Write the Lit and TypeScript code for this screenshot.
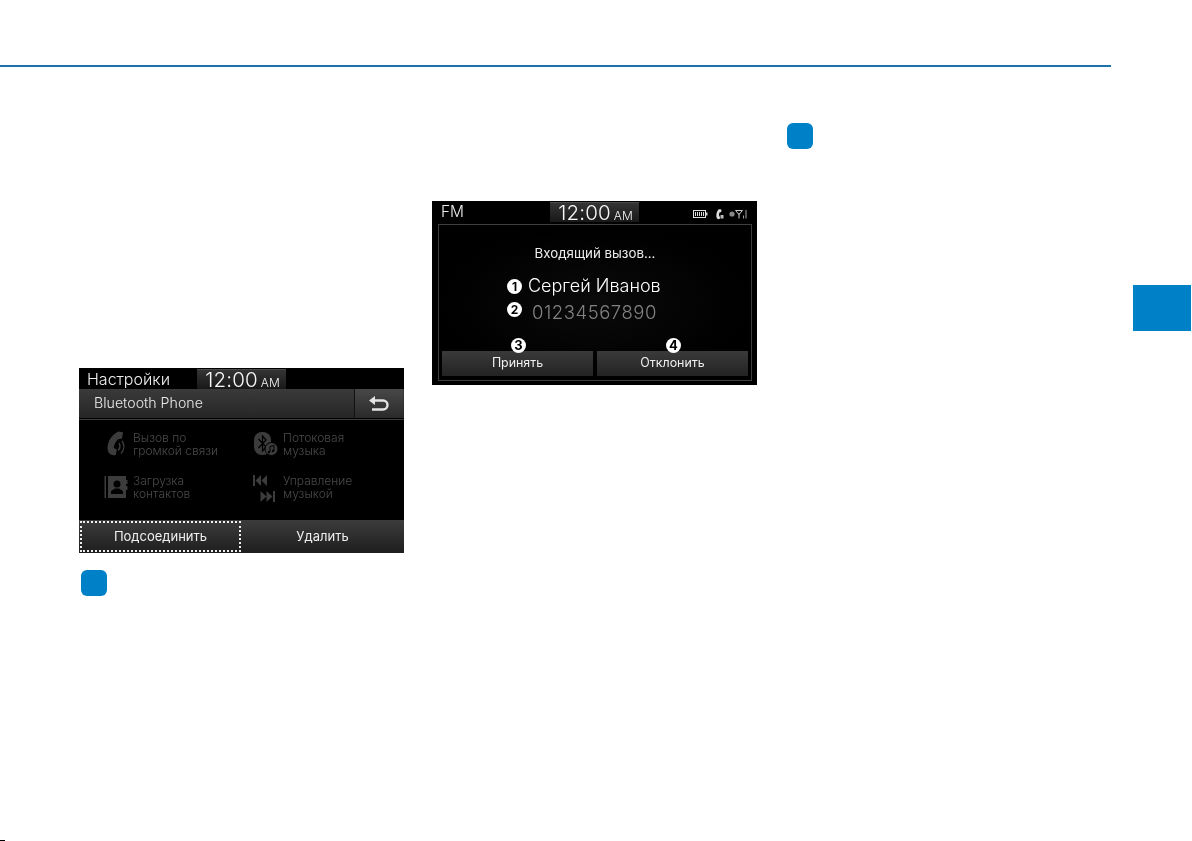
import { LitElement, html, css, svg } from "lit";
import { customElement } from "lit/decorators.js";

const backIcon = svg`<svg viewBox="0 0 20 16" width="20" height="16"><path d="M0 4.500 6 0v9Z" fill="#e4e4e4"/><path d="M4 4.500h10a4.500 4.500 0 0 1 0 9H3" fill="none" stroke="#e4e4e4" stroke-width="2.400"/></svg>`;
const phoneIcon = svg`<svg viewBox="0 0 21 25" width="21" height="25"><path d="M12.500.5 17 1.200l-1 6.300-4 .8C9.500 11 7.800 14 7.800 17l3 1.500-1 5.500C5 25 1.500 22 1.500 17 1.500 10 6 3.500 12.500.5Z" fill="#3c3c3c"/><path d="M13 12c1.500 2.500 1.300 5-.8 7.500M16 10c2.600 3.500 2.500 8.500-1 12.500" fill="none" stroke="#3c3c3c" stroke-width="1.400"/></svg>`;
const btIcon = svg`<svg viewBox="0 0 26 26" width="26" height="26"><rect x="1" y="1" width="17" height="23" rx="8" fill="#3c3c3c"/><path d="M5.500 8 13 16l-3.500 4V5L13 9l-7.500 8" fill="none" stroke="#000" stroke-width="1.300"/><circle cx="18.500" cy="18" r="6.500" fill="#3c3c3c" stroke="#000"/><path d="M17 21v-5.500l4-1V20" fill="none" stroke="#000" stroke-width="1"/><circle cx="16" cy="21" r="1.200" fill="#000"/><circle cx="20" cy="20" r="1.200" fill="#000"/></svg>`;
const contactIcon = svg`<svg viewBox="0 0 24 24" width="24" height="24"><rect x="0.500" y="1" width="1.500" height="22" fill="#3c3c3c"/><rect x="4" y="1" width="18" height="22" fill="#3c3c3c"/><rect x="22" y="5" width="1.500" height="4" fill="#3c3c3c"/><rect x="22" y="11" width="1.500" height="4" fill="#3c3c3c"/><circle cx="13" cy="9" r="3.500" fill="#000"/><path d="M7 19v-2c0-2 3-2.500 4-3.500h4c1 1 4 1.500 4 3.500v2Z" fill="#000"/></svg>`;
const skipIcon = svg`<svg viewBox="0 0 26 30" width="26" height="30"><g fill="#3c3c3c"><rect x="0" y="1" width="2" height="11"/><path d="M8 1v11L2.500 6.500ZM14 1v11L8.500 6.500Z"/><rect x="20" y="17" width="2" height="11"/><path d="M7.500 17v11l6-5.500ZM13.500 17v11l6-5.500Z"/></g></svg>`;
const statusIcons = svg`<svg viewBox="0 0 56 12" width="56" height="12"><rect x="0.500" y="2.500" width="12" height="7" fill="none" stroke="#ddd"/><path d="M2.500 4v4M4.500 4v4M6.500 4v4M8.500 4v4M10.500 4v4" stroke="#ddd"/><rect x="13" y="4.500" width="1.500" height="3" fill="#ccc"/><path d="M25.500 1.500c1.500-.6 3-.2 3 1l-.3 1.500-1.700.6c-.6 1.300-.6 2.400-.2 3.600l.8.8-.4 2c-2 .6-3.400-.6-3.400-3.200 0-2.800 1-5 2.200-6.300Z" fill="#ddd"/><rect x="27.500" y="7" width="3" height="3.500" fill="#bbb"/><circle cx="39" cy="6" r="2.600" fill="#888"/><path d="M42.500 2.500h7l-3.500 4Z" fill="none" stroke="#ccc"/><rect x="45.500" y="5" width="1" height="5.500" fill="#ccc"/><rect x="50" y="7.500" width="1" height="3" fill="#999"/><rect x="52.500" y="2" width="1" height="8.500" fill="#aaa"/></svg>`;

@customElement("app-root")
export class AppRoot extends LitElement {
  static styles = css`
    :host { display: flex; flex-direction: column; width: 1192px; height: 841px; background: #fff; overflow: hidden; font-family: "Inter", "Liberation Sans", sans-serif; font-weight: 300; }
    .rule { margin-top: 65px; width: 1111px; height: 2px; background: #1b72ad; flex: none; }
    .page { flex: 1; display: flex; align-items: flex-start; padding-left: 79px; }
    .corner { flex: none; width: 5px; height: 1px; background: #000; }
    .col { display: flex; flex-direction: column; }
    .col1 { width: 325px; padding-top: 301px; }
    .col2 { width: 325px; margin-left: 28px; padding-top: 134px; }
    .col3 { width: 26px; margin-left: 30px; padding-top: 56px; }
    .tab { width: 58px; height: 46px; margin-left: 320px; margin-top: 218px; background: #0080c6; }
    .marker { width: 26px; height: 26px; border-radius: 6px; background: #0080c6; }
    .col1 .marker { margin: 17px 0 0 2px; }

    .screen { background: #000; color: #eee; display: flex; flex-direction: column; filter: blur(0.3px); }
    .s1 { height: 185px; }
    .s2 { height: 184px; position: relative; }
    .status { height: 21px; display: flex; align-items: flex-end; flex: none; }
    .title { font-size: 16px; line-height: 20px; padding-left: 8px; width: 118px; box-sizing: border-box; }
    .s2 .title { padding-left: 9px; font-size: 15.500px; }
    .clock { width: 89px; height: 20px; box-sizing: border-box; display: flex; justify-content: center; align-items: baseline; gap: 3px; padding-left: 2px; background: linear-gradient(#343434, #181818); border-top: 1px solid #4a4a4a; font-size: 20.500px; letter-spacing: 0.150px; line-height: 19px; color: #f6f6f6; }
    .clock small { font-size: 12px; line-height: 1; letter-spacing: 0; }
    .icons { margin-left: auto; padding-right: 8px; height: 18px; }

    .head { height: 29px; display: flex; background: linear-gradient(#3a3a3a, #262626); flex: none; align-items: stretch; }
    .head .name { flex: 1; font-size: 14.200px; line-height: 28px; padding-left: 15px; color: #eaeaea; }
    .head .back { width: 48px; margin-right: 1px; border-left: 1px solid #111; background: linear-gradient(#484848, #2a2a2a); display: flex; align-items: center; justify-content: center; }
    .sep { height: 1px; background: #3c3c3c; margin-top: 1px; flex: none; }
    .features { height: 100px; flex: none; display: grid; grid-template-columns: 150px 1fr; grid-auto-rows: 43px; padding: 2px 0 0 24px; box-sizing: border-box; align-content: start; }
    .feat { display: flex; align-items: center; gap: 2px; color: #4a4a4a; font-size: 12px; line-height: 13px; }
    .feat .ic { width: 26px; display: flex; justify-content: center; flex: none; }
    .feat .ic.down { padding-top: 4px; }
    .feat span { padding-left: 2px; }
    .btns { flex: 1; display: flex; }
    .btn { display: flex; align-items: center; justify-content: center; font-size: 13px; font-weight: 400; color: #f0f0f0; box-sizing: border-box; flex: 1; padding-bottom: 2px; }
    .s1 .btns { background: linear-gradient(#3c3c3c, #1e1e1e); }
    .btn.focus { flex: none; width: 161px; margin: 1px 0 1px 1px; border: 2px dotted #eee; }

    .panel { flex: 1; margin: 2px 5px 4px 6px; border: 1px solid #3e3e3e; background: radial-gradient(ellipse at center, #0a0a0a, #000 70%); display: flex; flex-direction: column; align-items: center; }
    .incoming { font-size: 13.300px; margin-top: 20px; line-height: 16px; color: #ededed; font-weight: 400; }
    .row { display: flex; align-items: center; align-self: flex-start; margin-left: 68px; }
    .row.name { margin-top: 13px; font-size: 18px; line-height: 24px; color: #fff; gap: 6px; }
    .row.num { margin-top: 2px; font-size: 18.500px; line-height: 24px; color: #828282; gap: 10px; }
    .row.num .t { letter-spacing: 0.550px; }
    .row.num .n { margin-top: -5px; }
    .n { width: 15px; height: 15px; border-radius: 50%; background: #fff; color: #000; font-size: 12px; font-weight: 700; line-height: 15px; letter-spacing: 0; text-align: center; flex: none; }
    .s2 .btns { flex: none; margin-top: auto; padding: 0 3px 4px; gap: 4px; width: 100%; box-sizing: border-box; height: 29px; }
    .s2 .btn { font-size: 12.400px; position: relative; background: linear-gradient(#3a3a3a, #232323); }
    .s2 .btn .n { position: absolute; top: -13px; left: 50%; margin-left: -6.500px; font-size: 13px; }
  `;

  render() {
    return html`
      <div class="rule"></div>
      <div class="page">
        <div class="col col1">
          <div class="screen s1">
            <div class="status">
              <div class="title">Настройки</div>
              <div class="clock">12:00<small>AM</small></div>
            </div>
            <div class="head">
              <div class="name">Bluetooth Phone</div>
              <div class="back">${backIcon}</div>
            </div>
            <div class="sep"></div>
            <div class="features">
              <div class="feat"><div class="ic">${phoneIcon}</div><span>Вызов по<br />громкой связи</span></div>
              <div class="feat"><div class="ic">${btIcon}</div><span>Потоковая<br />музыка</span></div>
              <div class="feat"><div class="ic">${contactIcon}</div><span>Загрузка<br />контактов</span></div>
              <div class="feat"><div class="ic down">${skipIcon}</div><span>Управление<br />музыкой</span></div>
            </div>
            <div class="btns">
              <div class="btn focus">Подсоединить</div>
              <div class="btn">Удалить</div>
            </div>
          </div>
          <div class="marker"></div>
        </div>
        <div class="col col2">
          <div class="screen s2">
            <div class="status">
              <div class="title">FM</div>
              <div class="clock">12:00<small>AM</small></div>
              <div class="icons">${statusIcons}</div>
            </div>
            <div class="panel">
              <div class="incoming">Входящий вызов...</div>
              <div class="row name"><div class="n">1</div><div class="t">Сергей Иванов</div></div>
              <div class="row num"><div class="n">2</div><div class="t">01234567890</div></div>
              <div class="btns">
                <div class="btn"><div class="n">3</div>Принять</div>
                <div class="btn"><div class="n">4</div>Отклонить</div>
              </div>
            </div>
          </div>
        </div>
        <div class="col col3"><div class="marker"></div></div>
        <div class="tab"></div>
      </div>
      <div class="corner"></div>
    `;
  }
}
